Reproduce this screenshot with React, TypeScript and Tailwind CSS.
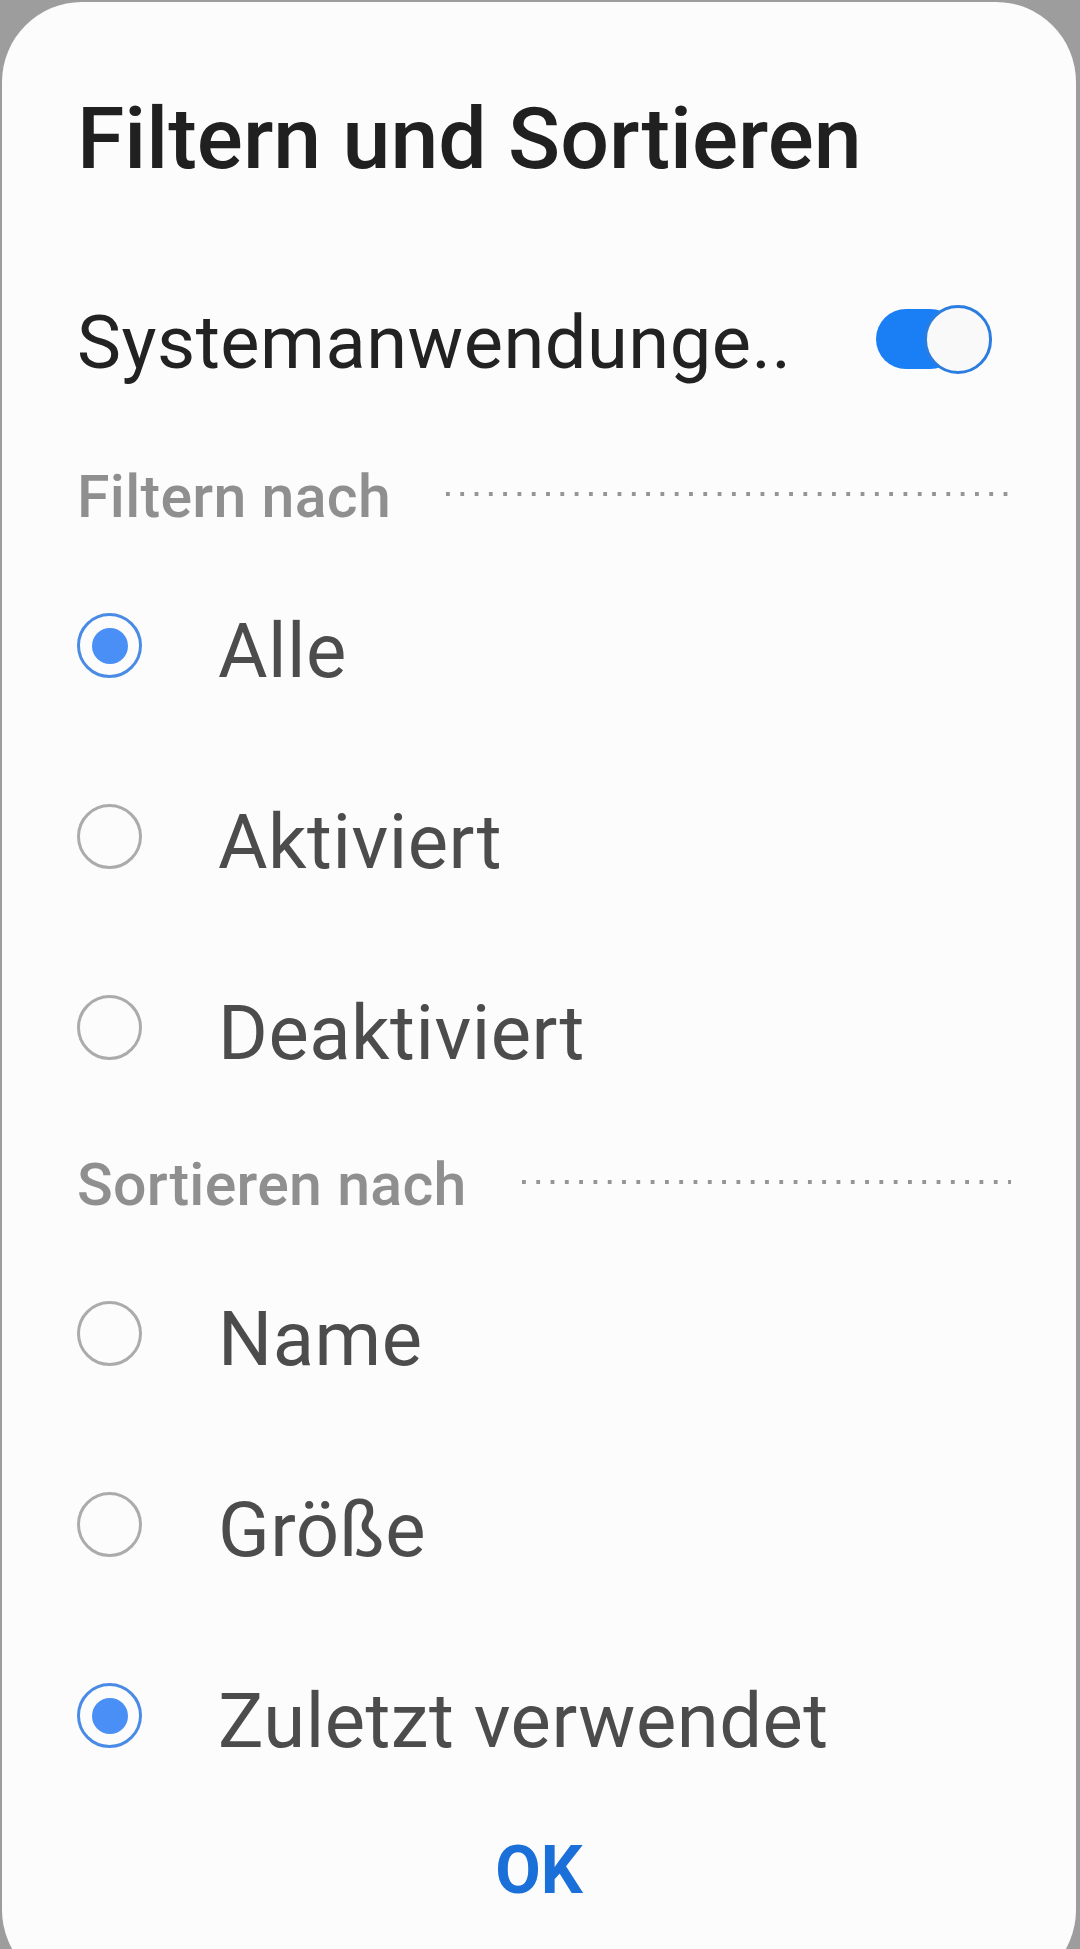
const FONT = "font-['Roboto','Noto_Sans',sans-serif]";

interface OptionProps {
  label: string;
  checked?: boolean;
}

function RadioRow(props: OptionProps) {
  const { label, checked } = props;
  return (
    <div className="flex h-[191px] items-center">
      <div
        className={`flex h-[65px] w-[65px] shrink-0 items-center justify-center rounded-full border-[3px] ${
          checked ? "border-[#4a8be6]" : "border-[#ababab]"
        }`}
      >
        {checked && <div className="h-[36px] w-[36px] rounded-full bg-[#4a8ff6]" />}
      </div>
      <span className="ml-[76px] mt-[10px] text-[76px] leading-none tracking-[0.5px] text-[#4c4c4c]">
        {label}
      </span>
    </div>
  );
}

function SectionHeader({ label }: { label: string }) {
  return (
    <div className="flex items-start">
      <span className="text-[59px] font-medium leading-none tracking-[0.3px] text-[#8f8f8f]">
        {label}
      </span>
      {/* dotted rule */}
      <div className="ml-[55px] mr-[65px] mt-[25px] h-[4px] flex-1 bg-[linear-gradient(to_right,#959595_4px,transparent_4px)] bg-[length:14.3px_4px] bg-repeat-x" />
    </div>
  );
}

function Toggle() {
  return (
    <div className="relative h-[69px] w-[116px] shrink-0">
      <div className="absolute left-0 top-[4px] h-[60px] w-[84px] rounded-full bg-[#1a7ff5]" />
      <div className="absolute right-0 top-0 h-[69px] w-[68px] rounded-full border-[3px] border-[#2b7de0] bg-[#f9f9f9]" />
    </div>
  );
}

export default function App() {
  return (
    <div className={`h-[1949px] w-full overflow-hidden bg-[#9d9d9d] pl-[2px] pr-[4px] pt-[2px] ${FONT}`}>
      <div className="flex h-[1988px] flex-col rounded-[80px] bg-[#fcfcfc] pl-[75px] pt-[94px]">
        <h1 className="text-[86px] font-medium leading-none text-[#202020]">
          Filtern und Sortieren
        </h1>

        <div className="mt-[124px] flex items-start">
          <span className="flex-1 text-[74px] leading-none tracking-[0.5px] text-[#222222]">
            Systemanwendunge..
          </span>
          <div className="mr-[84px] -mt-px">
            <Toggle />
          </div>
        </div>

        <div className="mt-[87px]">
          <SectionHeader label="Filtern nach" />
        </div>
        <div className="mt-[24px] flex flex-col">
          <RadioRow label="Alle" checked />
          <RadioRow label="Aktiviert" />
          <RadioRow label="Deaktiviert" />
        </div>

        <div className="mt-[32px]">
          <SectionHeader label="Sortieren nach" />
        </div>
        <div className="mt-[24px] flex flex-col">
          <RadioRow label="Name" />
          <RadioRow label="Größe" />
          <RadioRow label="Zuletzt verwendet" checked />
        </div>

        <button
          type="button"
          className="mt-[27px] -ml-[75px] text-center text-[66px] font-bold leading-none text-[#1a6fd8]"
        >
          OK
        </button>
      </div>
    </div>
  );
}
